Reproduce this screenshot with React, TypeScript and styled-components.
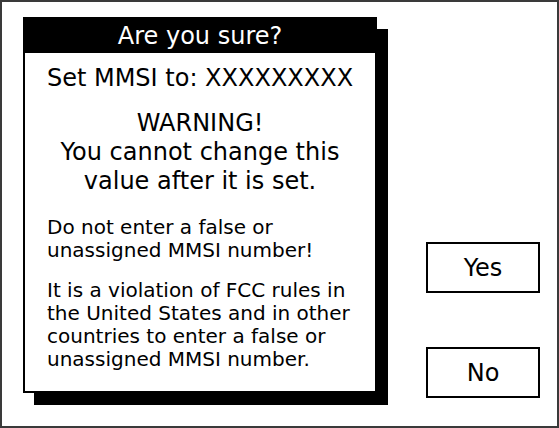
import styled, { createGlobalStyle } from "styled-components";

const GlobalStyle = createGlobalStyle`
  html, body {
    margin: 0;
    padding: 0;
    background: #ffffff;
  }
  body {
    font-family: "DejaVu Sans", "Liberation Sans", sans-serif;
    color: #000000;
  }
`;

const Screen = styled.div`
  box-sizing: border-box;
  width: 559px;
  height: 428px;
  border: 2px solid #3a3a3a;
  display: flex;
  align-items: flex-start;
  padding: 15px 0 0 21px;
`;

const Dialog = styled.div`
  box-sizing: border-box;
  width: 354px;
  height: 376px;
  border: 2px solid #000000;
  background: #ffffff;
  box-shadow: 11px 12px 0 #000000;
  display: flex;
  flex-direction: column;
`;

const TitleBar = styled.div`
  height: 34px;
  line-height: 34px;
  background: #000000;
  color: #ffffff;
  font-size: 24px;
  text-align: center;
`;

const Body = styled.div`
  padding: 11px 20px 0 20px;
  display: flex;
  flex-direction: column;
`;

const Headline = styled.div<{ $gap?: number }>`
  font-size: 24px;
  line-height: 29px;
  text-align: center;
  margin-top: ${(p) => p.$gap ?? 0}px;
`;

const Note = styled.p<{ $gap: number }>`
  margin: ${(p) => p.$gap}px 0 0 2px;
  font-size: 20px;
  line-height: 23px;
`;

const Actions = styled.div`
  display: flex;
  flex-direction: column;
  gap: 54px;
  margin: 225px 0 0 49px;
`;

const Button = styled.button`
  box-sizing: border-box;
  width: 114px;
  height: 51px;
  border: 2px solid #000000;
  background: #ffffff;
  font-family: "DejaVu Sans", "Liberation Sans", sans-serif;
  font-size: 24px;
  color: #000000;
  padding: 0;
  cursor: pointer;
`;

export default function App() {
  return (
    <>
      <GlobalStyle />
      <Screen>
        <Dialog>
          <TitleBar>Are you sure?</TitleBar>
          <Body>
            <Headline>Set MMSI to: XXXXXXXXX</Headline>
            <Headline $gap={16}>
              WARNING!
              <br />
              You cannot change this
              <br />
              value after it is set.
            </Headline>
            <Note $gap={20}>
              Do not enter a false or
              <br />
              unassigned MMSI number!
            </Note>
            <Note $gap={17}>
              It is a violation of FCC rules in
              <br />
              the United States and in other
              <br />
              countries to enter a false or
              <br />
              unassigned MMSI number.
            </Note>
          </Body>
        </Dialog>
        <Actions>
          <Button>Yes</Button>
          <Button>No</Button>
        </Actions>
      </Screen>
    </>
  );
}
